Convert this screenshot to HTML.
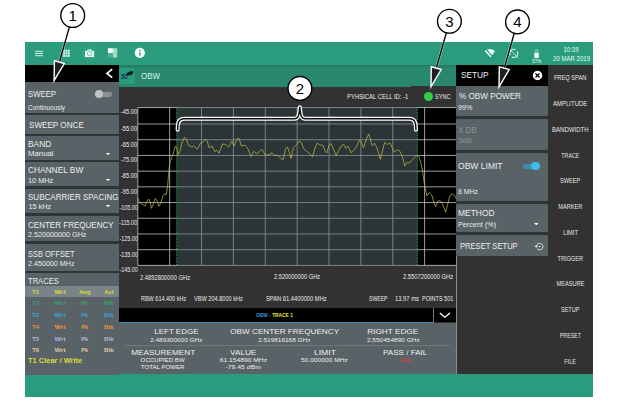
<!DOCTYPE html>
<html><head><meta charset="utf-8"><title>OBW</title>
<style>
html,body{margin:0;padding:0;background:#fff;}
body{position:relative;width:624px;height:406px;overflow:hidden;font-family:"Liberation Sans", Arial, sans-serif;}
div{box-sizing:border-box;}
</style></head><body>
<div style="position:absolute;left:25.00px;top:42.00px;width:567.90px;height:354.80px;background:#323232;"></div>
<div style="position:absolute;left:25.00px;top:42.00px;width:567.90px;height:23.00px;background:#2a9b7d;"></div>
<div style="position:absolute;left:25.00px;top:373.80px;width:567.90px;height:23.00px;background:#2a9b7d;"></div>
<div style="position:absolute;left:119.00px;top:65.00px;width:292.00px;height:21.50px;background:#28876d;background:linear-gradient(#237a62 0,#28876d 3px);"></div>
<div style="position:absolute;left:410.90px;top:65.00px;width:45.30px;height:20.80px;background:#28876d;background:linear-gradient(#237a62 0,#28876d 3px);"></div>
<div style="position:absolute;left:25.00px;top:65.00px;width:94.00px;height:17.40px;background:#000;"></div>
<div style="position:absolute;left:25.00px;top:82.40px;width:94.00px;height:293.10px;background:#2f3436;"></div>
<div style="position:absolute;left:456.20px;top:65.00px;width:91.50px;height:21.00px;background:#000;"></div>
<div style="position:absolute;left:547.70px;top:65.00px;width:45.20px;height:308.80px;background:#323232;"></div>
<div style="position:absolute;left:25.00px;top:82.40px;width:94.00px;height:30.40px;background:#596266;"></div>
<div style="position:absolute;left:25.00px;top:115.00px;width:94.00px;height:18.90px;background:#596266;"></div>
<div style="position:absolute;left:25.00px;top:136.10px;width:94.00px;height:23.70px;background:#596266;"></div>
<div style="position:absolute;left:25.00px;top:162.00px;width:94.00px;height:24.40px;background:#596266;"></div>
<div style="position:absolute;left:25.00px;top:188.70px;width:94.00px;height:24.50px;background:#596266;"></div>
<div style="position:absolute;left:25.00px;top:215.50px;width:94.00px;height:25.90px;background:#596266;"></div>
<div style="position:absolute;left:25.00px;top:243.80px;width:94.00px;height:27.20px;background:#596266;"></div>
<div style="position:absolute;left:25.00px;top:273.20px;width:94.00px;height:102.30px;background:#596266;"></div>
<div id="t0" class="t" style="position:absolute;top:88.60px;font-size:8.8px;line-height:11px;height:11px;color:#ececec;white-space:nowrap;width:35.79px;left:28.10px;transform-origin:0 50%;transform:scaleX(0.8809);">SWEEP</div>
<div id="t1" class="t" style="position:absolute;top:104.10px;font-size:6.4px;line-height:8px;height:8px;color:#ececec;white-space:nowrap;width:41.00px;left:28.10px;transform-origin:0 50%;">Continuously</div>
<div id="t2" class="t" style="position:absolute;top:120.40px;font-size:8.8px;line-height:11px;height:11px;color:#ececec;white-space:nowrap;width:63.50px;left:28.90px;transform-origin:0 50%;transform:scaleX(0.9211);">SWEEP ONCE</div>
<div id="t3" class="t" style="position:absolute;top:138.50px;font-size:8.8px;line-height:11px;height:11px;color:#ececec;white-space:nowrap;width:28.45px;left:28.40px;transform-origin:0 50%;transform:scaleX(0.9489);">BAND</div>
<div id="t4" class="t" style="position:absolute;top:149.10px;font-size:7.3px;line-height:9px;height:9px;color:#ececec;white-space:nowrap;width:27.94px;left:28.40px;transform-origin:0 50%;transform:scaleX(1.0692);">Manual</div>
<div id="t5" class="t" style="position:absolute;top:164.70px;font-size:8.8px;line-height:11px;height:11px;color:#ececec;white-space:nowrap;width:62.35px;left:28.40px;transform-origin:0 50%;transform:scaleX(0.9477);">CHANNEL BW</div>
<div id="t6" class="t" style="position:absolute;top:175.70px;font-size:7.3px;line-height:9px;height:9px;color:#ececec;white-space:nowrap;width:29.15px;left:28.40px;transform-origin:0 50%;transform:scaleX(1.0059);">10 MHz</div>
<div id="t7" class="t" style="position:absolute;top:191.50px;font-size:8.8px;line-height:11px;height:11px;color:#ececec;white-space:nowrap;width:103.10px;left:28.40px;transform-origin:0 50%;transform:scaleX(0.9142);">SUBCARRIER SPACING</div>
<div id="t8" class="t" style="position:absolute;top:201.80px;font-size:7.3px;line-height:9px;height:9px;color:#ececec;white-space:nowrap;width:26.72px;left:28.40px;transform-origin:0 50%;">15 kHz</div>
<div id="t9" class="t" style="position:absolute;top:219.50px;font-size:8.8px;line-height:11px;height:11px;color:#ececec;white-space:nowrap;width:97.88px;left:28.40px;transform-origin:0 50%;transform:scaleX(0.9129);">CENTER FREQUENCY</div>
<div id="t10" class="t" style="position:absolute;top:229.70px;font-size:7.3px;line-height:9px;height:9px;color:#ececec;white-space:nowrap;width:63.26px;left:28.40px;transform-origin:0 50%;transform:scaleX(0.9872);">2.520000000 GHz</div>
<div id="t11" class="t" style="position:absolute;top:248.60px;font-size:8.8px;line-height:11px;height:11px;color:#ececec;white-space:nowrap;width:58.77px;left:28.40px;transform-origin:0 50%;transform:scaleX(0.8491);">SSB OFFSET</div>
<div id="t12" class="t" style="position:absolute;top:258.70px;font-size:7.3px;line-height:9px;height:9px;color:#ececec;white-space:nowrap;width:51.48px;left:28.40px;transform-origin:0 50%;transform:scaleX(0.9794);">2.450000 MHz</div>
<div id="t13" class="t" style="position:absolute;top:276.40px;font-size:8.8px;line-height:11px;height:11px;color:#ececec;white-space:nowrap;width:39.70px;left:28.40px;transform-origin:0 50%;transform:scaleX(0.8628);">TRACES</div>
<div style="position:absolute;left:95px;top:92px;width:17px;height:4.8px;border-radius:2.4px;background:#8b9093"></div>
<div style="position:absolute;left:94.9px;top:90.4px;width:8px;height:8px;border-radius:4px;background:#c2c2c2"></div>
<svg style="position:absolute;left:106.40px;top:152.90px" width="4.2" height="2.2" viewBox="0 0 4.2 2.2"><path d="M0 0H4.2L2.1 2.2Z" fill="#fff"/></svg>
<svg style="position:absolute;left:106.40px;top:179.30px" width="4.2" height="2.2" viewBox="0 0 4.2 2.2"><path d="M0 0H4.2L2.1 2.2Z" fill="#fff"/></svg>
<svg style="position:absolute;left:106.40px;top:205.40px" width="4.2" height="2.2" viewBox="0 0 4.2 2.2"><path d="M0 0H4.2L2.1 2.2Z" fill="#fff"/></svg>
<div style="position:absolute;left:25.00px;top:286.10px;width:94.00px;height:11.20px;background:#7a8488;"></div>
<div id="t14" class="t" style="position:absolute;top:287.60px;font-size:6.2px;line-height:7px;height:7px;color:#dcdc3c;white-space:nowrap;width:11.24px;font-weight:bold;left:30.48px;text-align:center;transform-origin:50% 50%;transform:scaleX(0.9122);">T1</div>
<div id="t15" class="t" style="position:absolute;top:287.60px;font-size:6.2px;line-height:7px;height:7px;color:#dcdc3c;white-space:nowrap;width:14.22px;font-weight:bold;left:53.39px;text-align:center;transform-origin:50% 50%;transform:scaleX(1.0962);">Wrt</div>
<div id="t16" class="t" style="position:absolute;top:287.60px;font-size:6.2px;line-height:7px;height:7px;color:#dcdc3c;white-space:nowrap;width:15.48px;font-weight:bold;left:76.76px;text-align:center;transform-origin:50% 50%;transform:scaleX(1.0189);">Avg</div>
<div id="t17" class="t" style="position:absolute;top:287.60px;font-size:6.2px;line-height:7px;height:7px;color:#dcdc3c;white-space:nowrap;width:13.99px;font-weight:bold;left:101.50px;text-align:center;transform-origin:50% 50%;transform:scaleX(0.9609);">Act</div>
<div id="t18" class="t" style="position:absolute;top:298.80px;font-size:6.2px;line-height:7px;height:7px;color:#33a365;white-space:nowrap;width:11.24px;font-weight:bold;left:30.48px;text-align:center;transform-origin:50% 50%;transform:scaleX(0.9536);">T2</div>
<div id="t19" class="t" style="position:absolute;top:298.80px;font-size:6.2px;line-height:7px;height:7px;color:#33a365;white-space:nowrap;width:14.22px;font-weight:bold;left:53.39px;text-align:center;transform-origin:50% 50%;transform:scaleX(1.0962);">Wrt</div>
<div id="t20" class="t" style="position:absolute;top:298.80px;font-size:6.2px;line-height:7px;height:7px;color:#33a365;white-space:nowrap;width:11.58px;font-weight:bold;left:78.71px;text-align:center;transform-origin:50% 50%;transform:scaleX(0.9230);">Pk</div>
<div id="t21" class="t" style="position:absolute;top:298.80px;font-size:6.2px;line-height:7px;height:7px;color:#33a365;white-space:nowrap;width:13.65px;font-weight:bold;left:101.68px;text-align:center;transform-origin:50% 50%;transform:scaleX(0.9950);">Blk</div>
<div id="t22" class="t" style="position:absolute;top:310.70px;font-size:6.2px;line-height:7px;height:7px;color:#3aa3dc;white-space:nowrap;width:11.24px;font-weight:bold;left:30.48px;text-align:center;transform-origin:50% 50%;transform:scaleX(0.9536);">T3</div>
<div id="t23" class="t" style="position:absolute;top:310.70px;font-size:6.2px;line-height:7px;height:7px;color:#3aa3dc;white-space:nowrap;width:14.22px;font-weight:bold;left:53.39px;text-align:center;transform-origin:50% 50%;transform:scaleX(1.0962);">Wrt</div>
<div id="t24" class="t" style="position:absolute;top:310.70px;font-size:6.2px;line-height:7px;height:7px;color:#3aa3dc;white-space:nowrap;width:11.58px;font-weight:bold;left:78.71px;text-align:center;transform-origin:50% 50%;transform:scaleX(0.9230);">Pk</div>
<div id="t25" class="t" style="position:absolute;top:310.70px;font-size:6.2px;line-height:7px;height:7px;color:#3aa3dc;white-space:nowrap;width:13.65px;font-weight:bold;left:101.68px;text-align:center;transform-origin:50% 50%;transform:scaleX(0.9950);">Blk</div>
<div id="t26" class="t" style="position:absolute;top:323.40px;font-size:6.2px;line-height:7px;height:7px;color:#ea9238;white-space:nowrap;width:11.24px;font-weight:bold;left:30.48px;text-align:center;transform-origin:50% 50%;transform:scaleX(0.9536);">T4</div>
<div id="t27" class="t" style="position:absolute;top:323.40px;font-size:6.2px;line-height:7px;height:7px;color:#ea9238;white-space:nowrap;width:14.22px;font-weight:bold;left:53.39px;text-align:center;transform-origin:50% 50%;transform:scaleX(1.0962);">Wrt</div>
<div id="t28" class="t" style="position:absolute;top:323.40px;font-size:6.2px;line-height:7px;height:7px;color:#ea9238;white-space:nowrap;width:11.58px;font-weight:bold;left:78.71px;text-align:center;transform-origin:50% 50%;transform:scaleX(0.9230);">Pk</div>
<div id="t29" class="t" style="position:absolute;top:323.40px;font-size:6.2px;line-height:7px;height:7px;color:#ea9238;white-space:nowrap;width:13.65px;font-weight:bold;left:101.68px;text-align:center;transform-origin:50% 50%;transform:scaleX(0.9950);">Blk</div>
<div id="t30" class="t" style="position:absolute;top:335.10px;font-size:6.2px;line-height:7px;height:7px;color:#a9b9dc;white-space:nowrap;width:11.24px;font-weight:bold;left:30.48px;text-align:center;transform-origin:50% 50%;transform:scaleX(0.9536);">T5</div>
<div id="t31" class="t" style="position:absolute;top:335.10px;font-size:6.2px;line-height:7px;height:7px;color:#a9b9dc;white-space:nowrap;width:14.22px;font-weight:bold;left:53.39px;text-align:center;transform-origin:50% 50%;transform:scaleX(1.0962);">Wrt</div>
<div id="t32" class="t" style="position:absolute;top:335.10px;font-size:6.2px;line-height:7px;height:7px;color:#a9b9dc;white-space:nowrap;width:11.58px;font-weight:bold;left:78.71px;text-align:center;transform-origin:50% 50%;transform:scaleX(0.9230);">Pk</div>
<div id="t33" class="t" style="position:absolute;top:335.10px;font-size:6.2px;line-height:7px;height:7px;color:#a9b9dc;white-space:nowrap;width:13.65px;font-weight:bold;left:101.68px;text-align:center;transform-origin:50% 50%;transform:scaleX(0.9950);">Blk</div>
<div id="t34" class="t" style="position:absolute;top:345.80px;font-size:6.2px;line-height:7px;height:7px;color:#e4c4a2;white-space:nowrap;width:11.24px;font-weight:bold;left:30.48px;text-align:center;transform-origin:50% 50%;transform:scaleX(0.9536);">T6</div>
<div id="t35" class="t" style="position:absolute;top:345.80px;font-size:6.2px;line-height:7px;height:7px;color:#e4c4a2;white-space:nowrap;width:14.22px;font-weight:bold;left:53.39px;text-align:center;transform-origin:50% 50%;transform:scaleX(1.0962);">Wrt</div>
<div id="t36" class="t" style="position:absolute;top:345.80px;font-size:6.2px;line-height:7px;height:7px;color:#e4c4a2;white-space:nowrap;width:11.58px;font-weight:bold;left:78.71px;text-align:center;transform-origin:50% 50%;transform:scaleX(0.9230);">Pk</div>
<div id="t37" class="t" style="position:absolute;top:345.80px;font-size:6.2px;line-height:7px;height:7px;color:#e4c4a2;white-space:nowrap;width:13.65px;font-weight:bold;left:101.68px;text-align:center;transform-origin:50% 50%;transform:scaleX(0.9950);">Blk</div>
<div id="t38" class="t" style="position:absolute;top:357.30px;font-size:7px;line-height:8px;height:8px;color:#dcdc3c;white-space:nowrap;width:54.83px;font-weight:bold;left:27.80px;transform-origin:0 50%;transform:scaleX(1.0663);">T1 Clear / Write</div>
<svg style="position:absolute;left:104px;top:66px" width="12" height="15" viewBox="0 0 12 15"><path d="M8.2 3.1L3 7.4L8.2 11.7" fill="none" stroke="#fff" stroke-width="1.7"/></svg>
<div style="position:absolute;left:119.4px;top:68.2px;width:15.4px;height:15.4px;border-radius:2px;background:#2a9b7d"></div>
<div id="t39" class="t" style="position:absolute;top:72.50px;font-size:6.4px;line-height:8px;height:8px;color:#182c5c;white-space:nowrap;width:12.54px;font-weight:bold;font-style:italic;left:121.10px;transform-origin:0 50%;transform:scaleX(0.8082);">5G</div>
<svg style="position:absolute;left:126px;top:71px" width="9" height="6" viewBox="0 0 9 6"><path d="M0.1 4.3C0.6 1.1 4.2 -0.5 7.7 0.6C7.2 3.6 3.6 5.2 0.1 4.3Z" fill="#08241d"/></svg>
<div id="t40" class="t" style="position:absolute;top:70.90px;font-size:8.4px;line-height:10px;height:10px;color:#d6f3ea;white-space:nowrap;width:24.06px;left:140.80px;transform-origin:0 50%;transform:scaleX(0.9469);">OBW</div>
<svg style="position:absolute;left:25px;top:42px" width="568" height="23" viewBox="25 42 568 23"><g fill="#d2f7ea"><rect x="35" y="50.8" width="8" height="1"/><rect x="35" y="53" width="8" height="1"/><rect x="35" y="55.2" width="8" height="1"/></g><rect x="63.20" y="49.70" width="1.9" height="2.1" fill="#d2f7ea"/><rect x="63.20" y="52.25" width="1.9" height="2.1" fill="#d2f7ea"/><rect x="63.20" y="54.80" width="1.9" height="2.1" fill="#d2f7ea"/><rect x="65.55" y="49.70" width="1.9" height="2.1" fill="#d2f7ea"/><rect x="65.55" y="52.25" width="1.9" height="2.1" fill="#d2f7ea"/><rect x="65.55" y="54.80" width="1.9" height="2.1" fill="#d2f7ea"/><rect x="67.90" y="49.70" width="1.9" height="2.1" fill="#d2f7ea"/><rect x="67.90" y="52.25" width="1.9" height="2.1" fill="#d2f7ea"/><rect x="67.90" y="54.80" width="1.9" height="2.1" fill="#d2f7ea"/><circle cx="89.5" cy="53.3" r="7.8" fill="#31a184"/><path d="M85 50.9h2l0.8-1.5h3.4l0.8 1.5h2.1v6.1h-9.1z" fill="#e8fbf5"/><circle cx="89.5" cy="53.5" r="2.15" fill="none" stroke="#43a98e" stroke-width="0.7"/><rect x="107.9" y="48.2" width="5" height="4.8" fill="#f4fffb"/><rect x="112.9" y="48.2" width="4.3" height="4.9" fill="#a4dfca"/><rect x="107.9" y="53.1" width="5" height="4.4" fill="#4db094"/><rect x="112.9" y="53.1" width="4.3" height="4.5" fill="#9cdbc6"/><circle cx="139.8" cy="52.9" r="5.1" fill="#f4fffb"/><rect x="139.2" y="52.1" width="1.3" height="3.6" fill="#2a9b7d"/><circle cx="139.85" cy="50.5" r="0.8" fill="#2a9b7d"/><path d="M484.7 51.2C487.6 48.1 492.2 48.3 494.9 51.4L490.5 57.4Z" fill="#e8fbf5"/><path d="M485.4 48.4L493.4 57.6" stroke="#2a9b7d" stroke-width="1.25"/><path d="M484.6 49.5L491.6 57.5" stroke="#2a9b7d" stroke-width="0"/><path d="M486.4 48.3L494 57" stroke="#e8fbf5" stroke-width="0"/><g transform="translate(513.7 53.4)" fill="none" stroke="#d4f5ea" stroke-width="1.1"><path d="M-3.6 1.8A4 4 0 0 1 1.8 -3.6"/><path d="M3.6 -1.8A4 4 0 0 1 -1.8 3.6"/><path d="M-4.4 -4.4L4.4 4.4" stroke-width="0.8"/></g><rect x="535.6" y="48.7" width="1.9" height="1.3" fill="#5cb89e"/><rect x="534.3" y="49.8" width="4.5" height="3.3" fill="#62bca2"/><rect x="534.3" y="53" width="4.5" height="5" fill="#f4fffb"/></svg>
<div id="t41" class="t" style="position:absolute;top:59.10px;font-size:4.8px;line-height:6px;height:6px;color:#e8fbf5;white-space:nowrap;width:13.61px;left:529.75px;text-align:center;transform-origin:50% 50%;transform:scaleX(0.9680);">57%</div>
<div id="t42" class="t" style="position:absolute;top:46.30px;font-size:6.4px;line-height:8px;height:8px;color:#e8fbf5;white-space:nowrap;width:20.02px;left:561.29px;text-align:center;transform-origin:50% 50%;transform:scaleX(0.9428);">10:39</div>
<div id="t43" class="t" style="position:absolute;top:55.10px;font-size:6.4px;line-height:8px;height:8px;color:#e8fbf5;white-space:nowrap;width:43.14px;left:549.63px;text-align:center;transform-origin:50% 50%;transform:scaleX(0.9454);">20 MAR 2019</div>
<div id="t44" class="t" style="position:absolute;top:73.80px;font-size:6.7px;line-height:8px;height:8px;color:#e6e6e6;white-space:nowrap;width:42.22px;left:549.14px;text-align:center;transform-origin:50% 50%;transform:scaleX(0.8503);">FREQ SPAN</div>
<div id="t45" class="t" style="position:absolute;top:99.56px;font-size:6.7px;line-height:8px;height:8px;color:#e6e6e6;white-space:nowrap;width:42.35px;left:549.08px;text-align:center;transform-origin:50% 50%;transform:scaleX(0.8945);">AMPLITUDE</div>
<div id="t46" class="t" style="position:absolute;top:126.32px;font-size:6.7px;line-height:8px;height:8px;color:#e6e6e6;white-space:nowrap;width:44.57px;left:547.96px;text-align:center;transform-origin:50% 50%;transform:scaleX(0.9046);">BANDWIDTH</div>
<div id="t47" class="t" style="position:absolute;top:152.08px;font-size:6.7px;line-height:8px;height:8px;color:#e6e6e6;white-space:nowrap;width:26.71px;left:556.90px;text-align:center;transform-origin:50% 50%;transform:scaleX(0.7927);">TRACE</div>
<div id="t48" class="t" style="position:absolute;top:176.84px;font-size:6.7px;line-height:8px;height:8px;color:#e6e6e6;white-space:nowrap;width:28.20px;left:556.15px;text-align:center;transform-origin:50% 50%;transform:scaleX(0.8388);">SWEEP</div>
<div id="t49" class="t" style="position:absolute;top:202.60px;font-size:6.7px;line-height:8px;height:8px;color:#e6e6e6;white-space:nowrap;width:32.67px;left:553.92px;text-align:center;transform-origin:50% 50%;transform:scaleX(0.8442);">MARKER</div>
<div id="t50" class="t" style="position:absolute;top:229.36px;font-size:6.7px;line-height:8px;height:8px;color:#e6e6e6;white-space:nowrap;width:21.12px;left:559.69px;text-align:center;transform-origin:50% 50%;transform:scaleX(0.8643);">LIMIT</div>
<div id="t51" class="t" style="position:absolute;top:255.12px;font-size:6.7px;line-height:8px;height:8px;color:#e6e6e6;white-space:nowrap;width:34.52px;left:552.99px;text-align:center;transform-origin:50% 50%;transform:scaleX(0.8322);">TRIGGER</div>
<div id="t52" class="t" style="position:absolute;top:279.88px;font-size:6.7px;line-height:8px;height:8px;color:#e6e6e6;white-space:nowrap;width:37.14px;left:551.68px;text-align:center;transform-origin:50% 50%;transform:scaleX(0.8480);">MEASURE</div>
<div id="t53" class="t" style="position:absolute;top:305.64px;font-size:6.7px;line-height:8px;height:8px;color:#e6e6e6;white-space:nowrap;width:26.34px;left:557.08px;text-align:center;transform-origin:50% 50%;transform:scaleX(0.8237);">SETUP</div>
<div id="t54" class="t" style="position:absolute;top:332.40px;font-size:6.7px;line-height:8px;height:8px;color:#e6e6e6;white-space:nowrap;width:30.81px;left:554.85px;text-align:center;transform-origin:50% 50%;transform:scaleX(0.7945);">PRESET</div>
<div id="t55" class="t" style="position:absolute;top:358.16px;font-size:6.7px;line-height:8px;height:8px;color:#e6e6e6;white-space:nowrap;width:18.15px;left:561.18px;text-align:center;transform-origin:50% 50%;transform:scaleX(0.8339);">FILE</div>
<div id="t56" class="t" style="position:absolute;top:68.70px;font-size:9.4px;line-height:11px;height:11px;color:#f0f0f0;white-space:nowrap;width:35.34px;left:461.20px;transform-origin:0 50%;transform:scaleX(0.8838);">SETUP</div>
<svg style="position:absolute;left:531.5px;top:69.5px" width="11" height="11" viewBox="-5.5 -5.5 11 11"><circle r="4.7" fill="#fff"/><path d="M-2 -2L2 2M2 -2L-2 2" stroke="#000" stroke-width="1.3"/></svg>
<div style="position:absolute;left:456.20px;top:86.00px;width:91.50px;height:169.80px;background:#2f3436;"></div>
<div style="position:absolute;left:456.2px;top:86px;width:91.5px;height:30.20px;background:#596266;border-radius:1.5px"></div>
<div style="position:absolute;left:456.2px;top:119px;width:91.5px;height:31.20px;background:#596266;border-radius:1.5px"></div>
<div style="position:absolute;left:456.2px;top:152.6px;width:91.5px;height:48.40px;background:#596266;border-radius:1.5px"></div>
<div style="position:absolute;left:456.2px;top:203.8px;width:91.5px;height:28.30px;background:#596266;border-radius:1.5px"></div>
<div style="position:absolute;left:456.2px;top:234.8px;width:91.5px;height:20.80px;background:#596266;border-radius:1.5px"></div>
<div id="t57" class="t" style="position:absolute;top:90.60px;font-size:8.8px;line-height:11px;height:11px;color:#ececec;white-space:nowrap;width:70.98px;left:458.50px;transform-origin:0 50%;transform:scaleX(0.9257);">% OBW POWER</div>
<div id="t58" class="t" style="position:absolute;top:102.60px;font-size:7.4px;line-height:9px;height:9px;color:#ececec;white-space:nowrap;width:18.81px;left:458.40px;transform-origin:0 50%;transform:scaleX(0.9723);">99%</div>
<div id="t59" class="t" style="position:absolute;top:125.30px;font-size:8.8px;line-height:11px;height:11px;color:#8d9397;white-space:nowrap;width:24.54px;left:458.40px;transform-origin:0 50%;transform:scaleX(0.9153);">X DB</div>
<div id="t60" class="t" style="position:absolute;top:136.30px;font-size:7.4px;line-height:9px;height:9px;color:#8d9397;white-space:nowrap;width:17.17px;left:458.40px;transform-origin:0 50%;transform:scaleX(1.0632);">3dB</div>
<div id="t61" class="t" style="position:absolute;top:160.90px;font-size:8.8px;line-height:11px;height:11px;color:#ececec;white-space:nowrap;width:49.96px;left:458.40px;transform-origin:0 50%;transform:scaleX(0.9705);">OBW LIMIT</div>
<div id="t62" class="t" style="position:absolute;top:186.50px;font-size:7.4px;line-height:9px;height:9px;color:#ececec;white-space:nowrap;width:25.38px;left:458.40px;transform-origin:0 50%;transform:scaleX(0.9354);">8 MHz</div>
<div id="t63" class="t" style="position:absolute;top:208.10px;font-size:8.8px;line-height:11px;height:11px;color:#ececec;white-space:nowrap;width:42.13px;left:458.40px;transform-origin:0 50%;transform:scaleX(0.9598);">METHOD</div>
<div id="t64" class="t" style="position:absolute;top:219.80px;font-size:7.4px;line-height:9px;height:9px;color:#ececec;white-space:nowrap;width:43.07px;left:458.40px;transform-origin:0 50%;transform:scaleX(0.9752);">Percent (%)</div>
<div id="t65" class="t" style="position:absolute;top:241.00px;font-size:8.8px;line-height:11px;height:11px;color:#ececec;white-space:nowrap;width:70.84px;left:459.70px;transform-origin:0 50%;transform:scaleX(0.8633);">PRESET SETUP</div>
<svg style="position:absolute;left:533.80px;top:223.00px" width="4.6" height="2.4" viewBox="0 0 4.6 2.4"><path d="M0 0H4.6L2.3 2.4Z" fill="#fff"/></svg>
<div style="position:absolute;left:522.5px;top:163.6px;width:17px;height:5.1px;border-radius:2.6px;background:#3b8db3"></div>
<div style="position:absolute;left:530.9px;top:161.7px;width:8.8px;height:8.8px;border-radius:4.4px;background:#41b9ea"></div>
<svg style="position:absolute;left:533.8px;top:240.5px" width="11" height="11" viewBox="-5.5 -5.5 11 11"><path d="M-3.2 -0.3A3.3 3.3 0 1 1 -2.4 2.3" fill="none" stroke="#e6e6e6" stroke-width="0.9"/><path d="M-5 -0.8L-3.2 1.4L-1.6 -1Z" fill="#e6e6e6"/><circle r="0.8" fill="#e6e6e6"/></svg>
<div style="position:absolute;left:456.20px;top:255.80px;width:1.00px;height:118.00px;background:#8c8c8c;"></div>
<div id="t66" class="t" style="position:absolute;top:93.30px;font-size:6.4px;line-height:8px;height:8px;color:#ececec;white-space:nowrap;width:70.40px;left:346.70px;transform-origin:0 50%;transform:scaleX(0.9263);">PYHSICAL CELL ID: -1</div>
<div style="position:absolute;left:423.8px;top:91.5px;width:9px;height:9px;border-radius:4.5px;background:#33cc44"></div>
<div id="t67" class="t" style="position:absolute;top:93.10px;font-size:6.4px;line-height:8px;height:8px;color:#ececec;white-space:nowrap;width:21.78px;left:435.30px;transform-origin:0 50%;transform:scaleX(0.8717);">SYNC</div>
<svg style="position:absolute;left:119px;top:86.2px" width="337.2" height="222" viewBox="119 86.2 337.2 222"><rect x="137.8" y="107.75" width="318.70" height="157.85" fill="#000"/><path d="M137.80 107.75V265.60M169.67 107.75V265.60M201.54 107.75V265.60M233.41 107.75V265.60M265.28 107.75V265.60M297.15 107.75V265.60M329.02 107.75V265.60M360.89 107.75V265.60M392.76 107.75V265.60M424.63 107.75V265.60M456.50 107.75V265.60M137.8 107.75H456.50M137.8 124.21H456.50M137.8 139.92H456.50M137.8 155.63H456.50M137.8 171.34H456.50M137.8 187.05H456.50M137.8 202.76H456.50M137.8 218.47H456.50M137.8 234.18H456.50M137.8 249.89H456.50M137.8 265.60H456.50" stroke="#cacaca" stroke-width="0.78" fill="none"/><rect x="176.8" y="107.25" width="240.50" height="158.85" fill="#52646a" fill-opacity="0.52"/><path d="M176.8 107.75V265.60M417.3 107.75V265.60" stroke="#2fb552" stroke-width="1" stroke-dasharray="1.15 1.15" fill="none"/><path d="M138.1 198.5L139.2 202.7L141.9 204.2L145.0 206.2L146.9 201.7L148.7 199.2L150.2 202.7L151.5 208.5L153.1 204.6L155.0 198.8L156.5 199.8L158.8 206.5L160.8 202.7L163.1 196.0L164.6 194.0L166.2 195.0L167.5 187.3L168.5 175.8L169.7 163.5L172.5 155.8L175.4 146.2L176.8 148.0L177.9 154.8L179.8 152.0L182.2 142.3L184.5 137.5L186.4 139.4L188.3 145.2L191.8 147.1L193.7 146.2L197.2 149.6L200.4 143.3L202.3 142.7L205.2 139.4L207.2 141.3L209.1 148.0L212.0 146.2L214.8 152.0L216.8 150.4L219.1 153.5L222.5 144.2L225.4 144.6L228.7 147.1L231.8 141.3L234.1 146.2L237.0 139.4L238.9 138.5L241.4 146.2L244.7 145.2L247.5 148.0L251.0 156.7L253.8 151.5L256.7 153.8L259.2 151.9L261.9 149.6L265.4 155.4L269.2 154.8L272.1 152.9L275.0 155.8L277.9 155.4L280.8 158.7L283.1 160.0L285.6 149.0L287.5 147.1L289.4 152.9L291.0 158.7L293.3 148.1L296.2 145.2L299.6 141.3L301.5 143.3L303.8 149.0L306.7 151.5L309.6 153.8L312.5 157.3L315.0 148.1L317.3 143.3L320.2 145.2L322.7 145.2L325.4 151.9L326.9 152.9L329.2 145.2L331.2 143.8L333.7 150.0L336.2 155.8L338.5 151.0L341.3 146.2L343.8 144.6L345.8 148.5L348.1 146.2L351.0 152.9L353.8 150.4L356.2 147.5L359.2 140.4L361.2 141.9L363.5 148.1L366.3 139.4L368.7 134.2L370.2 138.5L372.1 146.2L374.6 143.3L376.9 148.1L378.8 153.8L380.4 159.6L382.3 151.9L384.6 142.7L387.5 144.6L390.0 143.3L392.3 148.1L394.2 152.3L397.1 150.0L400.0 151.5L402.3 156.7L404.8 166.3L407.3 162.5L409.6 163.1L412.5 159.6L414.4 157.7L416.9 155.8L419.2 157.7L421.2 164.4L422.7 172.0L424.0 181.5L425.4 189.2L426.9 196.0L429.2 192.7L431.7 195.0L434.2 203.7L435.6 206.9L437.5 201.7L439.4 200.8L441.9 202.7L443.8 207.5L445.6 212.3L447.7 204.6L449.6 196.9L451.9 194.0L454.8 196.0L456.5 199.0" stroke="#c2bc44" stroke-width="0.72" fill="none" stroke-linejoin="round"/><path d="M177.6 129.9C177.6 124.5 177.8 119.0 184.2 119.0H294.4C298.2 119.0 299 116.2 299.8 107.5C300.6 116.2 301.4 119.0 305.2 119.0H409.4C415.8 119.0 415.95 124.5 415.95 129.9" stroke="#fff" stroke-width="4" fill="none" stroke-linecap="round" stroke-linejoin="round"/><path d="M177.6 129.9C177.6 124.5 177.8 119.0 184.2 119.0H294.4C298.2 119.0 299 116.2 299.8 107.5C300.6 116.2 301.4 119.0 305.2 119.0H409.4C415.8 119.0 415.95 124.5 415.95 129.9" stroke="#111" stroke-width="1.5" fill="none" stroke-linecap="round" stroke-linejoin="round"/></svg>
<div id="t68" class="t" style="position:absolute;top:108.00px;font-size:6.4px;line-height:8px;height:8px;color:#ececec;white-space:nowrap;width:22.15px;left:115.35px;text-align:right;transform-origin:100% 50%;transform:scaleX(0.8954);">-45.00</div>
<div id="t69" class="t" style="position:absolute;top:124.51px;font-size:6.4px;line-height:8px;height:8px;color:#ececec;white-space:nowrap;width:22.15px;left:115.35px;text-align:right;transform-origin:100% 50%;transform:scaleX(0.8954);">-55.00</div>
<div id="t70" class="t" style="position:absolute;top:141.22px;font-size:6.4px;line-height:8px;height:8px;color:#ececec;white-space:nowrap;width:22.15px;left:115.35px;text-align:right;transform-origin:100% 50%;transform:scaleX(0.8954);">-65.00</div>
<div id="t71" class="t" style="position:absolute;top:155.93px;font-size:6.4px;line-height:8px;height:8px;color:#ececec;white-space:nowrap;width:22.15px;left:115.35px;text-align:right;transform-origin:100% 50%;transform:scaleX(0.8954);">-75.00</div>
<div id="t72" class="t" style="position:absolute;top:171.64px;font-size:6.4px;line-height:8px;height:8px;color:#ececec;white-space:nowrap;width:22.15px;left:115.35px;text-align:right;transform-origin:100% 50%;transform:scaleX(0.8954);">-85.00</div>
<div id="t73" class="t" style="position:absolute;top:188.35px;font-size:6.4px;line-height:8px;height:8px;color:#ececec;white-space:nowrap;width:22.15px;left:115.35px;text-align:right;transform-origin:100% 50%;transform:scaleX(0.8954);">-95.00</div>
<div id="t74" class="t" style="position:absolute;top:204.06px;font-size:6.4px;line-height:8px;height:8px;color:#ececec;white-space:nowrap;width:25.71px;left:111.79px;text-align:right;transform-origin:100% 50%;transform:scaleX(0.8430);">-105.00</div>
<div id="t75" class="t" style="position:absolute;top:218.77px;font-size:6.4px;line-height:8px;height:8px;color:#ececec;white-space:nowrap;width:25.23px;left:112.27px;text-align:right;transform-origin:100% 50%;transform:scaleX(0.8619);">-115.00</div>
<div id="t76" class="t" style="position:absolute;top:235.48px;font-size:6.4px;line-height:8px;height:8px;color:#ececec;white-space:nowrap;width:25.71px;left:111.79px;text-align:right;transform-origin:100% 50%;transform:scaleX(0.8430);">-125.00</div>
<div id="t77" class="t" style="position:absolute;top:251.19px;font-size:6.4px;line-height:8px;height:8px;color:#ececec;white-space:nowrap;width:25.71px;left:111.79px;text-align:right;transform-origin:100% 50%;transform:scaleX(0.8430);">-135.00</div>
<div id="t78" class="t" style="position:absolute;top:265.90px;font-size:6.4px;line-height:8px;height:8px;color:#ececec;white-space:nowrap;width:25.71px;left:111.79px;text-align:right;transform-origin:100% 50%;transform:scaleX(0.8430);">-145.00</div>
<div id="t79" class="t" style="position:absolute;top:274.10px;font-size:6.4px;line-height:8px;height:8px;color:#ececec;white-space:nowrap;width:59.51px;left:140.40px;transform-origin:0 50%;transform:scaleX(0.9043);">2.4892800000 GHz</div>
<div id="t80" class="t" style="position:absolute;top:273.00px;font-size:6.4px;line-height:8px;height:8px;color:#ececec;white-space:nowrap;width:55.95px;left:273.80px;transform-origin:0 50%;transform:scaleX(0.8893);">2.520000000 GHz</div>
<div id="t81" class="t" style="position:absolute;top:273.00px;font-size:6.4px;line-height:8px;height:8px;color:#ececec;white-space:nowrap;width:59.51px;left:403.10px;transform-origin:0 50%;transform:scaleX(0.9043);">2.5507200000 GHz</div>
<div id="t82" class="t" style="position:absolute;top:294.50px;font-size:6.4px;line-height:8px;height:8px;color:#ececec;white-space:nowrap;width:56.64px;left:141.40px;transform-origin:0 50%;transform:scaleX(0.8586);">RBW 614.400 kHz</div>
<div id="t83" class="t" style="position:absolute;top:294.50px;font-size:6.4px;line-height:8px;height:8px;color:#ececec;white-space:nowrap;width:59.85px;left:193.90px;transform-origin:0 50%;transform:scaleX(0.8773);">VBW 204.8000 kHz</div>
<div id="t84" class="t" style="position:absolute;top:294.50px;font-size:6.4px;line-height:8px;height:8px;color:#ececec;white-space:nowrap;width:71.48px;left:266.20px;transform-origin:0 50%;transform:scaleX(0.9010);">SPAN 61.4400000 MHz</div>
<div id="t85" class="t" style="position:absolute;top:294.50px;font-size:6.4px;line-height:8px;height:8px;color:#ececec;white-space:nowrap;width:27.12px;left:368.50px;transform-origin:0 50%;transform:scaleX(0.8003);">SWEEP</div>
<div id="t86" class="t" style="position:absolute;top:294.50px;font-size:6.4px;line-height:8px;height:8px;color:#ececec;white-space:nowrap;width:30.33px;left:394.70px;transform-origin:0 50%;transform:scaleX(0.9117);">13.97 ms</div>
<div id="t87" class="t" style="position:absolute;top:294.50px;font-size:6.4px;line-height:8px;height:8px;color:#ececec;white-space:nowrap;width:40.28px;left:421.70px;transform-origin:0 50%;transform:scaleX(0.8654);">POINTS 501</div>
<div style="position:absolute;left:119.00px;top:308.20px;width:337.20px;height:13.60px;background:#000;"></div>
<div style="position:absolute;left:119.00px;top:321.60px;width:314.80px;height:1.90px;background:#4585a6;"></div>
<div style="position:absolute;left:119.00px;top:323.20px;width:337.20px;height:50.60px;background:#596266;"></div>
<div style="position:absolute;left:433.40px;top:308.20px;width:0.80px;height:13.60px;background:#777;"></div>
<div style="position:absolute;left:119.00px;top:321.80px;width:0.01px;height:0.00px;background:#000;"></div>
<svg style="position:absolute;left:438px;top:311px" width="14" height="9" viewBox="438 311 14 9"><path d="M439.8 313L444.9 317.2L450 313" fill="none" stroke="#fff" stroke-width="1.3"/></svg>
<div id="t88" class="t" style="position:absolute;top:312.00px;font-size:5.2px;line-height:6px;height:6px;color:#3a9ad4;white-space:nowrap;width:43.58px;font-weight:bold;left:256.40px;transform-origin:0 50%;transform:scaleX(0.9324);">OBW - <span style="color:#ece436">TRACE 1</span></div>
<div style="position:absolute;left:456.20px;top:308.20px;width:1.00px;height:65.60px;background:#8c8c8c;"></div>
<div id="t89" class="t" style="position:absolute;top:328.40px;font-size:7px;line-height:8px;height:8px;color:#eeeeee;white-space:nowrap;width:42.77px;left:154.81px;text-align:center;transform-origin:50% 50%;transform:scaleX(1.1400);">LEFT EDGE</div>
<div id="t90" class="t" style="position:absolute;top:337.00px;font-size:5.5px;line-height:7px;height:7px;color:#eeeeee;white-space:nowrap;width:48.65px;left:152.03px;text-align:center;transform-origin:50% 50%;transform:scaleX(1.1715);">2.489300000 GHz</div>
<div id="t91" class="t" style="position:absolute;top:328.40px;font-size:7px;line-height:8px;height:8px;color:#eeeeee;white-space:nowrap;width:97.34px;left:235.98px;text-align:center;transform-origin:50% 50%;transform:scaleX(1.1667);">OBW CENTER FREQUENCY</div>
<div id="t92" class="t" style="position:absolute;top:337.00px;font-size:5.5px;line-height:7px;height:7px;color:#eeeeee;white-space:nowrap;width:48.65px;left:260.13px;text-align:center;transform-origin:50% 50%;transform:scaleX(1.1715);">2.519816168 GHz</div>
<div id="t93" class="t" style="position:absolute;top:328.40px;font-size:7px;line-height:8px;height:8px;color:#eeeeee;white-space:nowrap;width:47.43px;left:369.28px;text-align:center;transform-origin:50% 50%;transform:scaleX(1.1742);">RIGHT EDGE</div>
<div id="t94" class="t" style="position:absolute;top:337.00px;font-size:5.5px;line-height:7px;height:7px;color:#eeeeee;white-space:nowrap;width:48.65px;left:368.53px;text-align:center;transform-origin:50% 50%;transform:scaleX(1.1804);">2.550454890 GHz</div>
<div style="position:absolute;left:123.70px;top:345.10px;width:325.90px;height:0.60px;background:#6e767a;"></div>
<div id="t95" class="t" style="position:absolute;top:349.20px;font-size:7px;line-height:8px;height:8px;color:#eeeeee;white-space:nowrap;width:58.45px;left:133.57px;text-align:center;transform-origin:50% 50%;transform:scaleX(1.1754);">MEASUREMENT</div>
<div id="t96" class="t" style="position:absolute;top:356.90px;font-size:5.5px;line-height:7px;height:7px;color:#eeeeee;white-space:nowrap;width:43.42px;left:140.99px;text-align:center;transform-origin:50% 50%;transform:scaleX(1.1213);">OCCUPIED BW</div>
<div id="t97" class="t" style="position:absolute;top:364.20px;font-size:5.5px;line-height:7px;height:7px;color:#eeeeee;white-space:nowrap;width:43.32px;left:141.24px;text-align:center;transform-origin:50% 50%;transform:scaleX(1.1139);">TOTAL POWER</div>
<div id="t98" class="t" style="position:absolute;top:349.20px;font-size:7px;line-height:8px;height:8px;color:#eeeeee;white-space:nowrap;width:26.44px;left:230.08px;text-align:center;transform-origin:50% 50%;transform:scaleX(1.1677);">VALUE</div>
<div id="t99" class="t" style="position:absolute;top:356.80px;font-size:5.5px;line-height:7px;height:7px;color:#eeeeee;white-space:nowrap;width:42.83px;left:221.88px;text-align:center;transform-origin:50% 50%;transform:scaleX(1.2155);">61.154890 MHz</div>
<div id="t100" class="t" style="position:absolute;top:364.20px;font-size:5.5px;line-height:7px;height:7px;color:#eeeeee;white-space:nowrap;width:32.43px;left:227.38px;text-align:center;transform-origin:50% 50%;transform:scaleX(1.2450);">-79.45 dBm</div>
<div id="t101" class="t" style="position:absolute;top:349.20px;font-size:7px;line-height:8px;height:8px;color:#eeeeee;white-space:nowrap;width:21.89px;left:313.61px;text-align:center;transform-origin:50% 50%;transform:scaleX(1.2353);">LIMIT</div>
<div id="t102" class="t" style="position:absolute;top:356.80px;font-size:5.5px;line-height:7px;height:7px;color:#eeeeee;white-space:nowrap;width:42.83px;left:303.08px;text-align:center;transform-origin:50% 50%;transform:scaleX(1.2104);">50.000000 MHz</div>
<div id="t103" class="t" style="position:absolute;top:349.20px;font-size:7px;line-height:8px;height:8px;color:#eeeeee;white-space:nowrap;width:42.39px;left:384.21px;text-align:center;transform-origin:50% 50%;transform:scaleX(1.1514);">PASS / FAIL</div>
<div id="t104" class="t" style="position:absolute;top:356.80px;font-size:5.5px;line-height:7px;height:7px;color:#e23a3a;white-space:nowrap;width:15.31px;left:397.89px;text-align:center;transform-origin:50% 50%;transform:scaleX(1.0520);">FAIL</div>
<svg style="position:absolute;left:0;top:0" width="624" height="406" viewBox="0 0 624 406"><path d="M69.5 26.6L58.8 64.0" stroke="#fff" stroke-opacity="0.55" stroke-width="2.6"/><path d="M69.5 26.6L58.8 64.0" stroke="#000" stroke-width="1.35"/><path d="M54.10 80.68L54.42 60.71L64.32 63.52Z" fill="#231f20" stroke="#fff" stroke-width="1.4" stroke-linejoin="miter" stroke-miterlimit="10"/><path d="M446.4 32.6L435.7 70.0" stroke="#fff" stroke-opacity="0.55" stroke-width="2.6"/><path d="M446.4 32.6L435.7 70.0" stroke="#000" stroke-width="1.35"/><path d="M431.00 86.68L431.32 66.71L441.22 69.52Z" fill="#231f20" stroke="#fff" stroke-width="1.4" stroke-linejoin="miter" stroke-miterlimit="10"/><path d="M514.4 32.7L503.7 70.1" stroke="#fff" stroke-opacity="0.55" stroke-width="2.6"/><path d="M514.4 32.7L503.7 70.1" stroke="#000" stroke-width="1.35"/><path d="M499.00 86.78L499.32 66.81L509.22 69.62Z" fill="#231f20" stroke="#fff" stroke-width="1.4" stroke-linejoin="miter" stroke-miterlimit="10"/><circle cx="72.7" cy="15.5" r="11.9" fill="#fff" stroke="#000" stroke-width="1.35"/><text x="72.7" y="20.9" font-family='"Liberation Sans", Arial, sans-serif' font-size="15" text-anchor="middle" fill="#000">1</text><circle cx="299.9" cy="88.4" r="11.9" fill="#fff" stroke="#000" stroke-width="1.35"/><text x="299.9" y="93.80000000000001" font-family='"Liberation Sans", Arial, sans-serif' font-size="15" text-anchor="middle" fill="#000">2</text><circle cx="449.4" cy="21.3" r="11.9" fill="#fff" stroke="#000" stroke-width="1.35"/><text x="449.4" y="26.700000000000003" font-family='"Liberation Sans", Arial, sans-serif' font-size="15" text-anchor="middle" fill="#000">3</text><circle cx="517.5" cy="21.9" r="11.9" fill="#fff" stroke="#000" stroke-width="1.35"/><text x="517.5" y="27.299999999999997" font-family='"Liberation Sans", Arial, sans-serif' font-size="15" text-anchor="middle" fill="#000">4</text></svg>
</body></html>
